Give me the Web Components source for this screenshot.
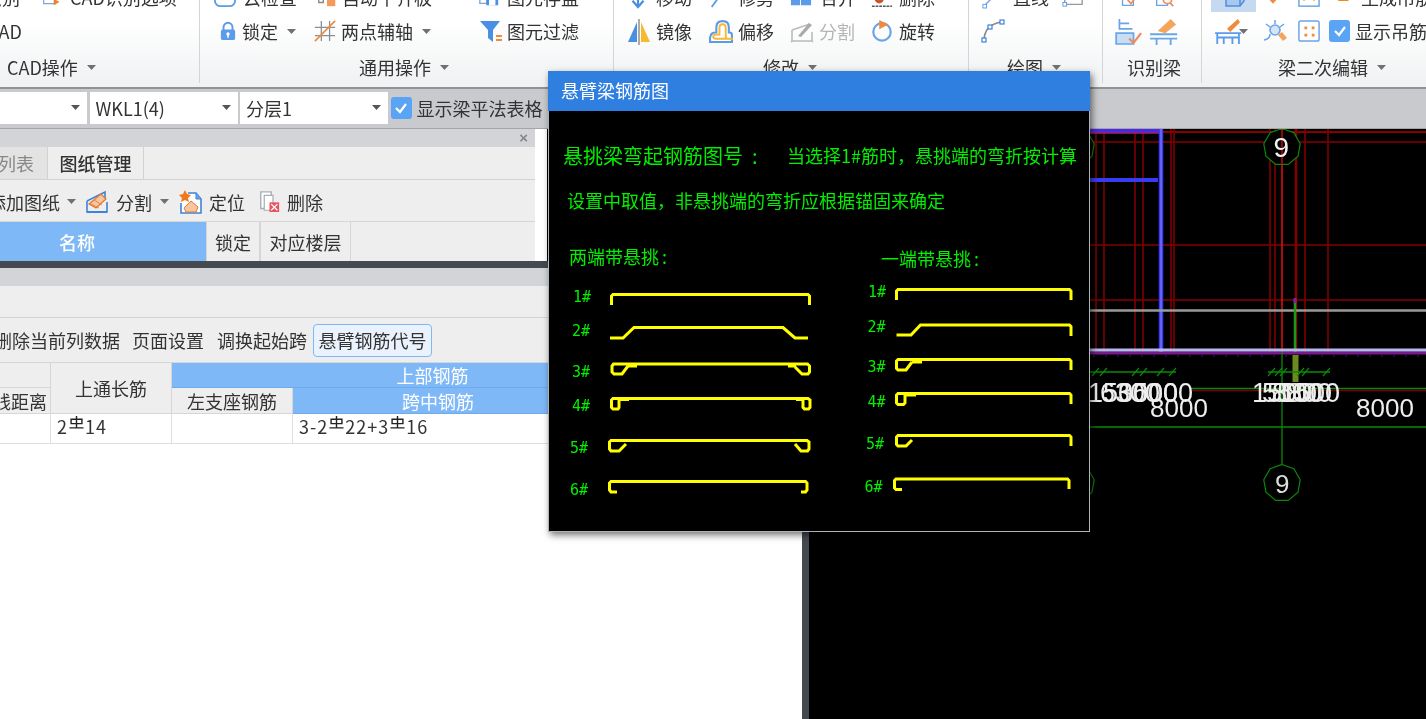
<!DOCTYPE html>
<html lang="zh-CN">
<head>
<meta charset="utf-8">
<title>悬臂梁钢筋图</title>
<style>
html,body{margin:0;padding:0;background:#000;overflow:hidden}
body{font:18px "Noto Sans CJK SC","Noto Sans",sans-serif;color:#333}
</style>
</head>
<body>
<app-shell>
  <rib-bon>
    <rb-group w="200" label="CAD操作" caret start="7">
      <rb-row><rb-item w="58" style="margin-left:-16px">识别</rb-item><rb-item icon="cadopt" iw="28" is="20">CAD识别选项</rb-item></rb-row>
      <rb-row><rb-item style="margin-left:-13px">CAD</rb-item></rb-row>
    </rb-group>
    <rb-group w="414" label="通用操作" caret start="159">
      <rb-row pad="14"><rb-item w="102" icon="cloud" iw="29" is="22">云检查</rb-item><rb-item w="162" icon="level" iw="26" is="22" caret>自动平齐板</rb-item><rb-item icon="save" iw="29" is="22">图元存盘</rb-item></rb-row>
      <rb-row pad="19"><rb-item w="95" icon="lock" iw="23" is="18" caret>锁定</rb-item><rb-item w="165" icon="axis" iw="27" is="22" caret>两点辅轴</rb-item><rb-item icon="filter" iw="28" is="24">图元过滤</rb-item></rb-row>
    </rb-group>
    <rb-group w="355" label="修改" caret start="149">
      <rb-row pad="13"><rb-item w="81" icon="move" iw="29" is="22">移动</rb-item><rb-item w="82" icon="trim" iw="30" is="22">修剪</rb-item><rb-item w="81" icon="merge" iw="30" is="22">合并</rb-item><rb-item icon="erase" iw="28" is="22">删除</rb-item></rb-row>
      <rb-row pad="13"><rb-item w="81" icon="mirror" iw="29" is="24">镜像</rb-item><rb-item w="82" icon="offset" iw="30" is="25">偏移</rb-item><rb-item w="81" icon="split" iw="29" is="24" muted>分割</rb-item><rb-item icon="rotate" iw="28" is="22">旋转</rb-item></rb-row>
    </rb-group>
    <rb-group w="134" label="绘图" caret start="38">
      <rb-row pad="13"><rb-item w="80" icon="line" iw="31" is="22">直线</rb-item><rb-item icon="rect" iw="24" is="22"></rb-item></rb-row>
      <rb-row pad="12"><rb-item icon="arc" iw="24" is="24"></rb-item></rb-row>
    </rb-group>
    <rb-group w="99" label="识别梁" start="24">
      <rb-row pad="17"><rb-item w="35" icon="chk1" iw="20" is="20"></rb-item><rb-item icon="chk2" iw="20" is="20"></rb-item></rb-row>
      <rb-row pad="11"><rb-item w="35" icon="beam1" iw="26" is="26"></rb-item><rb-item icon="beam2" iw="26" is="26"></rb-item></rb-row>
    </rb-group>
    <rb-group w="224" label="梁二次编辑" caret last start="76">
      <rb-row pad="9"><rb-item w="52" icon="box" iw="45" is="24" hl></rb-item><rb-item w="35" icon="gem" iw="20" is="20"></rb-item><rb-item w="40" icon="tag" iw="22" is="22"></rb-item><rb-item icon="tri" iw="23" is="16">生成吊筋</rb-item></rb-row>
      <rb-row pad="12"><rb-item w="49" icon="stir" iw="26" is="26" caret tight></rb-item><rb-item w="35" icon="spark" iw="24" is="24"></rb-item><rb-item w="31" icon="dots" iw="22" is="22"></rb-item><ui-check>显示吊筋</ui-check></rb-row>
    </rb-group>
  </rib-bon>
  <tool-strip></tool-strip>
  <main-area></main-area>
  <bar-dialog title-text="悬臂梁钢筋图"><rebar-figure></rebar-figure></bar-dialog>
</app-shell>

<script>
const ICONS={
cadopt:'<path d="M2 4h14v16H2z" fill="#fff" stroke="#7da7d8" stroke-width="1.5"/><path d="M14 14l7 4-7 4z" fill="#f08030"/>',
cloud:'<rect x="1" y="2" width="22" height="20" rx="6" fill="#fff" stroke="#5b9bea" stroke-width="2"/>',
level:'<path d="M3 6h5v12H3z" fill="#fff" stroke="#888" stroke-width="1.5"/><path d="M12 2h9v20h-9z" fill="#f59a5a"/>',
save:'<path d="M2 3h8v16H2z" fill="#fff" stroke="#7da7d8" stroke-width="1.5"/><rect x="9" y="8" width="13" height="13" fill="#4a90e2"/><rect x="12" y="15" width="7" height="6" fill="#fff"/>',
lock:'<path d="M6 11V7a6 6 0 0 1 12 0v4" fill="none" stroke="#5b9bea" stroke-width="2.6"/><rect x="2.5" y="10" width="19" height="14" rx="2.5" fill="#5b9bea"/><circle cx="12" cy="16" r="2.2" fill="#fff"/><rect x="11" y="16" width="2" height="5" fill="#fff"/>',
axis:'<path d="M8 1v22M17 1v22M1 8h22M1 17h22" stroke="#8a8f96" stroke-width="1.4" fill="none"/><path d="M1 23L23 1" stroke="#f08a3c" stroke-width="1.8"/>',
filter:'<path d="M1 2h20l-7 9v12l-5-4V11z" fill="#4a90e2"/><path d="M17 17h6M17 21h6" stroke="#f08a3c" stroke-width="1.8"/>',
move:'<path d="M12 0v22M6 16l6 7 6-7" fill="none" stroke="#4a90e2" stroke-width="2.4"/><path d="M2 6h20" stroke="#7da7d8" stroke-width="2"/>',
trim:'<path d="M4 23L20 1" stroke="#5b9bea" stroke-width="2"/>',
merge:'<rect x="1" y="4" width="10" height="17" fill="#5b9bea"/><rect x="12" y="4" width="11" height="17" fill="#5b9bea"/>',
erase:'<path d="M1 22h22" stroke="#555" stroke-width="1.6" stroke-dasharray="3 1"/><circle cx="9" cy="14" r="5" fill="#c8562a"/><path d="M12 12L22 4" stroke="#333" stroke-width="2.2"/>',
mirror:'<path d="M10 3v20L1 23z" fill="#4a90e2"/><path d="M12 0v26" stroke="#888" stroke-width="1.4"/><path d="M14 3v20h9z" fill="#f8b830"/>',
offset:'<path d="M2 22q-1-9 5-9h1V8q0-6 6-6t6 6v5h1q2 0 2 3v6z" fill="#fff" stroke="#5b9bea" stroke-width="2"/><path d="M8 19q-3 0-3-2t3-2h3V8q0-3 3-3t3 3v7q1 4-2 4M8 19h16" fill="none" stroke="#f8b830" stroke-width="1.8"/>',
split:'<path d="M2 11l18-6M2 11v11h20v-9M2 22l-1 1M22 22l1 1" fill="none" stroke="#bbb" stroke-width="1.6"/><path d="M8 17l11-13 3 2-11 12z" fill="#aaa"/>',
rotate:'<circle cx="12" cy="13" r="9.5" fill="none" stroke="#6aa5e8" stroke-width="2.4"/><path d="M9 0l10 5-10 5z" fill="#f08a3c"/>',
line:'<path d="M2 22L20 4" stroke="#7da7d8" stroke-width="1.6"/><rect x="1" y="20" width="4" height="4" fill="#fff" stroke="#5b9bea"/>',
rect:'<path d="M3 6h19v14H3z" fill="none" stroke="#999" stroke-width="1.5"/><rect x="1" y="18" width="4" height="4" fill="#fff" stroke="#5b9bea"/>',
arc:'<path d="M3 22Q3 6 20 3" fill="none" stroke="#888" stroke-width="1.6"/><rect x="1" y="19" width="4" height="4" fill="#fff" stroke="#3d84d8" stroke-width="1.2"/><rect x="7" y="6" width="4" height="4" fill="#fff" stroke="#3d84d8" stroke-width="1.2"/><rect x="19" y="1" width="4" height="4" fill="#fff" stroke="#3d84d8" stroke-width="1.2"/>',
chk1:'<path d="M3 2h13v20H3z" fill="#fff" stroke="#6aa5e8" stroke-width="1.6"/><path d="M9 15l4 5 8-10" fill="none" stroke="#f08a5c" stroke-width="2"/>',
chk2:'<path d="M2 2h13v20H2z" fill="#fff" stroke="#6aa5e8" stroke-width="1.6"/><circle cx="15" cy="15" r="5" fill="#fff" stroke="#f08a5c" stroke-width="2"/><path d="M18 19l4 4" stroke="#f08a5c" stroke-width="2"/>',
beam1:'<path d="M5 1v9h12M5 5h9" fill="none" stroke="#6aa5e8" stroke-width="1.6"/><path d="M2 14h16v10H2z" fill="#c9ddf5" stroke="#6aa5e8" stroke-width="1.6"/><path d="M14 19l4 4 7-9" fill="none" stroke="#f08a5c" stroke-width="2"/>',
beam2:'<path d="M8 12L20 1l5 5-10 8z" fill="#f5a45c"/><path d="M1 15h25M1 19h25M7 19v6M20 19v6" stroke="#6aa5e8" stroke-width="1.7" fill="none"/>',
box:'<path d="M4 7h14l4-5H8zM4 7v14h14V7M18 7l4-5v14l-4 5" fill="#a8c8ee" stroke="#4f8fdd" stroke-width="1.5"/>',
gem:'<path d="M2 4h20v5l-10 11L2 9z" fill="#f08a3c"/>',
tag:'<rect x="1" y="2" width="22" height="20" fill="#fff" stroke="#6aa5e8" stroke-width="1.6"/><path d="M7 10l-2 3 2 3M17 10l2 3-2 3" stroke="#f08a3c" fill="none" stroke-width="1.6"/>',
tri:'<path d="M8 2l8 16H0z" fill="#f08a1c"/>',
stir:'<path d="M12 10L22 1l2 3-9 9z" fill="#f08a3c"/><path d="M1 14h24M3 14v10M23 14v10M9 18v6M17 18v6M3 18h20" stroke="#5b9bea" stroke-width="1.7" fill="none"/>',
spark:'<circle cx="12" cy="11" r="5" fill="#d6e4f6" stroke="#6aa5e8" stroke-width="1.6"/><path d="M12 1v4M3 5l4 3M21 5l-4 3M1 21q6-1 6-6M17 15l5 5" stroke="#6aa5e8" stroke-width="1.5" fill="none"/><path d="M15 16l4-3 5 6-4 3z" fill="#f5a45c"/>',
dots:'<rect x="1" y="1" width="22" height="22" rx="2" fill="#fff" stroke="#6aa5e8" stroke-width="1.6"/><path d="M7 7h3v3H7zM15 7h3v3h-3zM7 15h3v3H7zM15 15h3v3h-3z" fill="#f08a3c"/>',
cut:'<path d="M2 11l12-6 6-3v6M2 11v11h20V12" fill="none" stroke="#3d84d8" stroke-width="1.6"/><path d="M4 14L16 4l5 5-10 9z" fill="#f5c6a0" stroke="#e8762c" stroke-width="1.2"/><path d="M6 14l8 4M9 10l8 5" stroke="#e8762c" stroke-width=".8"/><path d="M2 22h20" stroke="#3d84d8" stroke-width="2"/>',
locate:'<path d="M9 3h8l5 6v14H2V13" fill="#fff" stroke="#3d84d8" stroke-width="1.6"/><path d="M17 3v6h5" fill="#6aa5e8" stroke="#3d84d8"/><path d="M5 18l7-7 7 6-2 5H7z" fill="#f5c6a0" stroke="#e8762c"/><path d="M6 0l2 4 4 1-3 3 1 4-4-2-4 2 1-4-3-3 4-1z" fill="#f0781c"/>',
del:'<path d="M2 1h12v19H2z" fill="#fff" stroke="#a9aeb3" stroke-width="1.6"/><path d="M6 5h10v17H6z" fill="#fff" stroke="#a9aeb3" stroke-width="1.4"/><rect x="12" y="13" width="11" height="11" fill="#e8535d"/><path d="M14 15l7 7M21 15l-7 7" stroke="#fff" stroke-width="1.5"/>'
};
function svgIcon(name,size){
  return `<svg width="${size}" height="${size}" viewBox="0 0 24 24" aria-hidden="true" style="display:block;overflow:visible">${ICONS[name]||''}</svg>`;
}
function define(tag,fn,css){
  customElements.define(tag,class extends HTMLElement{
    constructor(){super();this.attachShadow({mode:'open'});}
    connectedCallback(){
      if(this._d)return;this._d=1;
      this.shadowRoot.innerHTML=`<style>${typeof css==='function'?css(this):css}</style>`+fn(this);
    }
  });
}
const caret=(c='#707070')=>`<svg width="9" height="5" viewBox="0 0 10 6" preserveAspectRatio="none" style="display:block;flex:none"><path d="M0 0h10L5 6z" fill="${c}"/></svg>`;
const MARK=`<svg width="15" height="13" viewBox="0 0 13 12" aria-label="三级钢" style="vertical-align:5px;margin:0 1px"><path d="M6.5 0v11M1.5 3h10v4h-10zM0 11h13" fill="none" stroke="#222" stroke-width="1.3"/></svg>`;

define('app-shell',()=>`<slot></slot>`,`:host{display:flex;flex-direction:column;width:1426px;height:719px;overflow:hidden;position:relative;filter:blur(.45px);background:#000}`);
define('rib-bon',()=>`<slot></slot>`,`:host{display:flex;flex:none;height:87px;border-bottom:2px solid #8f9194;overflow:hidden;background:linear-gradient(#fff 25%,#eff1f2)}`);
define('rb-group',h=>`<div class="rows"><slot></slot></div><div class="lab">${h.getAttribute('label')}${h.hasAttribute('caret')?caret():''}</div>`,
 h=>`:host{display:flex;flex-direction:column;flex:none;width:${h.getAttribute('w')}px;box-sizing:border-box;height:87px;position:relative;${h.hasAttribute('last')?'':'background:linear-gradient(#d4d5d6,#d4d5d6) right 0 top 0/1.5px 83px no-repeat'}}
 .rows{margin-top:-20px;height:68px}
 .lab{display:flex;align-items:center;gap:9px;height:26px;margin-top:6px;padding-left:${h.getAttribute('start')||0}px;white-space:nowrap;line-height:26px;color:#333}`);
define('rb-row',()=>`<slot></slot>`,h=>`:host{display:flex;align-items:center;height:34px;padding-left:${h.getAttribute('pad')||0}px;white-space:nowrap}`);
define('rb-item',h=>{
  const ic=h.getAttribute('icon'),is=h.getAttribute('is')||22;
  return (ic?`<span class="ic">${svgIcon(ic,is)}</span>`:'')+`<span class="t"><slot></slot></span>`+(h.hasAttribute('caret')?`<span class="c">${caret()}</span>`:'');
},h=>{const w=h.getAttribute('w'),iw=h.getAttribute('iw')||0;
 return `:host{display:inline-flex;align-items:center;flex:none;height:30px;${w?`width:${w}px;`:''}${h.hasAttribute('muted')?'color:#b5b5b5;':''}}
 .ic{display:flex;align-items:center;justify-content:${h.hasAttribute('hl')?'center':'flex-start'};width:${iw}px;height:30px;flex:none;${h.hasAttribute('hl')?'background:#c5d9f1;':''}}
 .c{margin-left:${h.hasAttribute('tight')?'-1':'9'}px}`;});
define('ui-check',()=>`<span class="b"><svg width="14" height="12" viewBox="0 0 14 12"><path d="M2 6l4 4 6-8" fill="none" stroke="#fff" stroke-width="2.2"/></svg></span><slot></slot>`,
 `:host{display:inline-flex;align-items:center;gap:5px;white-space:nowrap;color:#333}
 .b{display:flex;align-items:center;justify-content:center;width:21px;height:22px;border-radius:3px;background:#5aa4f5}`);
define('ui-combo',h=>`<span><slot></slot></span>${caret('#555')}`,h=>`:host{display:flex;align-items:center;justify-content:space-between;flex:none;box-sizing:border-box;width:${h.getAttribute('w')}px;height:32px;background:#fff;padding:0 7px 0 6px;white-space:nowrap;color:#333}`);
define('tool-strip',()=>`<ui-combo w="87"></ui-combo><ui-combo w="148">WKL1(4)</ui-combo><ui-combo w="148">分层1</ui-combo><ui-check>显示梁平法表格</ui-check>`,
 `:host{display:flex;align-items:center;gap:2.5px;flex:none;height:40px;box-sizing:border-box;padding-bottom:2px;background:#c8cacd;border-bottom:1.5px solid #a3a5a8}
 ui-check{margin-left:0}`);
define('main-area',()=>`<div class="left"><div class="up"><doc-panel></doc-panel><div class="sliver"></div></div><div class="bar"></div><table-panel></table-panel></div><div class="split"></div><cad-canvas></cad-canvas>`,
 `:host{display:flex;flex:1;min-height:0}
 .left{display:flex;flex-direction:column;width:802px;flex:none;background:#fff}
 .up{display:flex;height:132px;flex:none}
 .sliver{flex:1;background:#000}
 .bar{height:7px;background:#454a50;flex:none}
 .split{width:7px;background:#454a50;flex:none}`);
define('doc-panel',()=>`
 <div class="title"><span class="x">×</span></div>
 <div class="tabs"><div class="tab off"><span>列表</span></div><div class="tab on">图纸管理</div></div>
 <div class="tb">
   <span style="margin-left:-12px">添加图纸</span><span style="margin-left:7px">${caret()}</span>
   <span style="margin-left:9px">${svgIcon('cut',24)}</span><span style="margin-left:7px">分割</span><span style="margin-left:8px">${caret()}</span>
   <span style="margin-left:10px">${svgIcon('locate',24)}</span><span style="margin-left:6px">定位</span>
   <span style="margin-left:14px">${svgIcon('del',21)}</span><span style="margin-left:7px">删除</span>
 </div>
 <div class="hd"><div class="n">名称</div><div class="c" style="width:54px">锁定</div><div class="c" style="width:91px">对应楼层</div></div>`,
 `:host{display:block;width:547px;flex:none;box-sizing:border-box;padding-right:12px;background:#fff;height:132px;overflow:hidden;white-space:nowrap}
 .title{height:18px;background:#d3d4d8;position:relative;display:flex;justify-content:flex-end;align-items:center;padding-right:7px;font:700 15px/18px "Liberation Sans",sans-serif;color:#888}
 .tabs{display:flex;height:33px;box-sizing:border-box;background:#eee;border-bottom:1.5px solid #d2d2d2}
 .tab{box-sizing:border-box;display:flex;align-items:center;justify-content:center}
 .off{width:47px;background:#e3e3e3;color:#888;justify-content:flex-end;padding-right:13px}
 .on{width:97px;background:#eee;font-weight:500;border-right:1.5px solid #d2d2d2;border-left:1.5px solid #d2d2d2;color:#333}
 .tb{display:flex;align-items:center;height:42px;box-sizing:border-box;padding-top:2px;background:#eee;border-bottom:1.5px solid #d6d6d6}
 .hd{display:flex;height:39px;background:#eee}
 .n{width:206px;background:#7eb8f7;color:#fff;font-weight:500;display:flex;align-items:center;justify-content:center;padding-right:52px;box-sizing:border-box}
 .c{display:flex;align-items:center;justify-content:center;box-sizing:border-box;border-left:1.5px solid #d6d6d6;border-right:1px solid #d6d6d6}`);
define('table-panel',()=>`
 <div class="title"></div><div class="blank"></div>
 <div class="tb"><span style="margin-left:-6px">删除当前列数据</span><span style="margin-left:12px">页面设置</span><span style="margin-left:13px">调换起始跨</span><span class="btn">悬臂钢筋代号</span></div>
 <div class="grid">
  <div class="h" style="grid-area:1/1"></div>
  <div class="h r" style="grid-area:2/1">线距离</div>
  <div class="h" style="grid-area:1/2/3/3">上通长筋</div>
  <div class="b" style="grid-area:1/3/2/6">上部钢筋</div>
  <div class="h" style="grid-area:2/3">左支座钢筋</div>
  <div class="b" style="grid-area:2/4">跨中钢筋</div>
  <div class="b" style="grid-area:2/5"></div>
  <div class="d" style="grid-area:3/1"></div>
  <div class="d" style="grid-area:3/2"><span>2${MARK}14</span></div>
  <div class="d" style="grid-area:3/3"></div>
  <div class="d" style="grid-area:3/4"><span>3-2${MARK}22+3${MARK}16</span></div>
 </div>`,
 `:host{display:block;flex:1;min-height:0;background:#fff;overflow:hidden;white-space:nowrap}
 .title{height:18px;background:#d3d4d8}
 .blank{height:32px;box-sizing:border-box;background:#eee;border-bottom:1.5px solid #d2d2d2}
 .tb{display:flex;align-items:center;height:45px;box-sizing:border-box;background:#eee;border-bottom:1.5px solid #d6d6d6}
 .btn{margin-left:6px;box-sizing:border-box;height:33px;width:119px;display:flex;align-items:center;justify-content:center;background:#eaf3fd;border:1.5px solid #7eb8f7;border-radius:4px}
 .grid{display:grid;grid-template-columns:51px 121px 121px 290px 110px;grid-template-rows:25px 26px 30px}
 .h{background:#eee;display:flex;align-items:center;justify-content:center;box-sizing:border-box;border-right:1.5px solid #d6d6d6;border-bottom:1.5px solid #d6d6d6}
 .r{justify-content:flex-end;padding-right:3px}
 .b{background:#7eb8f7;color:#fff;display:flex;align-items:center;justify-content:center;box-sizing:border-box;border-bottom:1px solid #6eaaec}
 .d{background:#fff;display:flex;align-items:center;box-sizing:border-box;padding:0 0 5px 6px;letter-spacing:1px;border-right:1.5px solid #dedede;border-bottom:1.5px solid #dedede}`);

function ngon(cx,cy,r){let p=[];for(let i=0;i<9;i++){const a=-Math.PI/2+i*2*Math.PI/9;p.push((cx+r*Math.cos(a)).toFixed(1)+','+(cy+r*Math.sin(a)).toFixed(1));}return p.join(' ');}
define('cad-canvas',()=>{
 const dr='#860000';
 let s='';
 [1096,1104,1135,1143,1171,1174,1270,1275,1305,1328].forEach(x=>s+=`<path d="M${x} 128V352" stroke="${dr}" stroke-width="1.5"/>`);
 s+=`<path d="M1296 128V352" stroke="${dr}" stroke-width="2.5"/>`;
 [132,142,245,300].forEach(y=>s+=`<path d="M809 ${y}H1426" stroke="${dr}" stroke-width="${y==132?2:1.5}"/>`);
 s+=`<path d="M1282 128V352" stroke="#e81010" stroke-width="1.5"/>`;
 s+=`<path d="M809 131H1160" stroke="#4a2ae0" stroke-width="4"/><path d="M1090 133H1160" stroke="#a02070" stroke-width="1.5"/>`;
 s+=`<path d="M1161 128V352" stroke="#3a3af0" stroke-width="4.5"/><path d="M1161 128V352" stroke="#8a8aff" stroke-width="1"/><path d="M809 180H1158" stroke="#3a3af0" stroke-width="4"/>`;
 s+=`<path d="M809 310.5H1426" stroke="#9a9a9a" stroke-width="2.5"/>`;
 s+=`<path d="M1295 300V354" stroke="#1a9a1a" stroke-width="2.5"/><path d="M1295 298v5" stroke="#8020a0" stroke-width="3"/>`;
 s+=`<path d="M809 353H1426" stroke="#7a1a8a" stroke-width="3"/><path d="M809 350H1426" stroke="#b8b8f0" stroke-width="3"/>`;
 for(let x=1094;x<1426;x+=12)s+=`<path d="M${x} 355v2" stroke="#2020a0" stroke-width="1"/>`;
 s+=`<path d="M1295.5 355V382" stroke="#6a8a20" stroke-width="6"/>`;
 s+=`<path d="M1282 352V465" stroke="#0a8a0a" stroke-width="1.3"/><path d="M809 427H1426M1190 388.5H1426" stroke="#0a8a0a" stroke-width="1.3"/><path d="M1190 390.5H1426" stroke="#7a0010" stroke-width="1.3"/>`;
 s+=`<path d="M1090 372H1176M1268 372H1330" stroke="#0a8a0a" stroke-width="1.3"/>`;
 [1095,1103,1135,1143,1160,1172,1271,1278,1283,1300,1305,1326].forEach(x=>s+=`<path d="M${x-3} 376l7-8" stroke="#0a8a0a" stroke-width="1.2"/>`);
 [[1076,147],[1282,147],[1076,483],[1282,483]].forEach(([x,y])=>s+=`<polygon points="${ngon(x,y,18.5)}" fill="#000" stroke="#0a8a0a" stroke-width="1.2"/>`);
 s+=`<path d="M1282 128V165" stroke="#e81010" stroke-width="1.2"/>`;
 const T=(x,y,t,fs,c='#eee')=>`<text x="${x}" y="${y}" fill="${c}" font-size="${fs}" font-family="Liberation Sans,sans-serif">${t}</text>`;
 s+=T(1273.5,157,'9',28,'#f2f2f2')+T(1275,493,'9',26,'#ddd');
 [[1088,'1500'],[1100,'6300'],[1118,'3000'],[1133,'5000'],[1252,'1500'],[1262,'5500'],[1272,'8800'],[1280,'1500']].forEach(([x,t])=>s+=T(x,402,t,27));
 s+=T(1150,417,'8000',26)+T(1356,417,'8000',26);
 return `<svg viewBox="809 129 617 590" width="617" height="590" style="display:block">${s}</svg>`;
},`:host{display:block;flex:1;background:#000;overflow:hidden}`);
define('bar-dialog',h=>`<div class="t">${h.getAttribute('title-text')}</div><div class="body"><slot></slot></div>`,
 `:host{position:absolute;left:548px;top:71px;width:542px;height:461px;display:flex;flex-direction:column;box-shadow:2px 3px 7px rgba(0,0,0,.55)}
 .t{height:40px;box-sizing:border-box;padding:0 0 2px 13px;flex:none;background:#2e7fe0;color:#fff;display:flex;align-items:center}
 .body{flex:1;background:#000;box-sizing:border-box;border:1px solid #aeb3ba;border-top:0;overflow:hidden}`);
define('rebar-figure',()=>{
 const Y='#ffff00';
 const P=[
 'M611.5 305V296l1.5-1.5H808l1.5 1.5V305',
 'M610 338H623L634 327.5H783L795 338H808',
 'M628 366L622 374H614L612 372V366L613.5 364H807.5L809.5 366V372L808 374H802L795 367M628 366H637M788 366H796',
 'M629 399.5H619V407.5L618 409H613L611.5 407.5V400L613 398.5H808L810 400V407.5L808.5 409H804.5L803 407.5V399.5H796',
 'M626 444L619 451H611L609.5 449V442L611 440.5H807L809 442V449L807.5 451H801L795 444',
 'M617 492H611L609.5 490V483L611 481.5H805.5L807 483V490L805.5 492H801',
 'M896.5 300V291l1.5-1.5H1069.5l1.5 1.5V300',
 'M896.5 335H911L920.5 325H1069.5L1071 326.5V336',
 'M912 362L906 370H898L896.5 368.5V361L898 359.5H1069.5L1071 361V370M912 362H922',
 'M916 395H905V403L903.5 404.5H898L896.5 403V395L898 393.5H1069.5L1071 395V404',
 'M912 440L906 446H898L896.5 444.5V437L898 435.5H1069.5L1071 437V446',
 'M902 489.5H896L894.5 488V480.5L896 479H1067.5L1069 480.5V489'];
 const L=[[573,302],[572,336],[572,377],[572,411],[570,453],[570,495],[868,297],[867.5,332],[867.5,372],[867.5,407],[866,449],[864.5,492]];
 let s=P.map(d=>`<path d="${d}" fill="none" stroke="${Y}" stroke-width="3"/>`).join('');
 L.forEach(([x,y],i)=>s+=`<text x="${x}" y="${y}" class="n">${i%6+1}#</text>`);
 const G=(x,y,t,fs=18)=>`<text x="${x}" y="${y}" font-size="${fs}" class="c">${t}</text>`;
 const FW='\uFF0C';
 s+=G(563,164,'悬挑梁弯起钢筋图号<tspan dx="9">:</tspan>',20)
   +G(787,163,'当选择1#筋时'+FW+'悬挑端的弯折按计算')
   +G(567,208,'设置中取值'+FW+'非悬挑端的弯折应根据锚固来确定')
   +G(569,264,'两端带悬挑<tspan dx="3">:</tspan>')
   +G(881,266,'一端带悬挑<tspan dx="3">:</tspan>');
 return `<svg viewBox="549 111 540 420" width="540" height="420" style="display:block">${s}</svg>`;
},`:host{display:block}
 .c{fill:#00f000;font-family:"Noto Sans CJK SC",sans-serif;font-weight:400}
 .n{fill:#00f000;font:15px "DejaVu Sans Mono","Liberation Mono",monospace;}`);
</script>
</body>
</html>
